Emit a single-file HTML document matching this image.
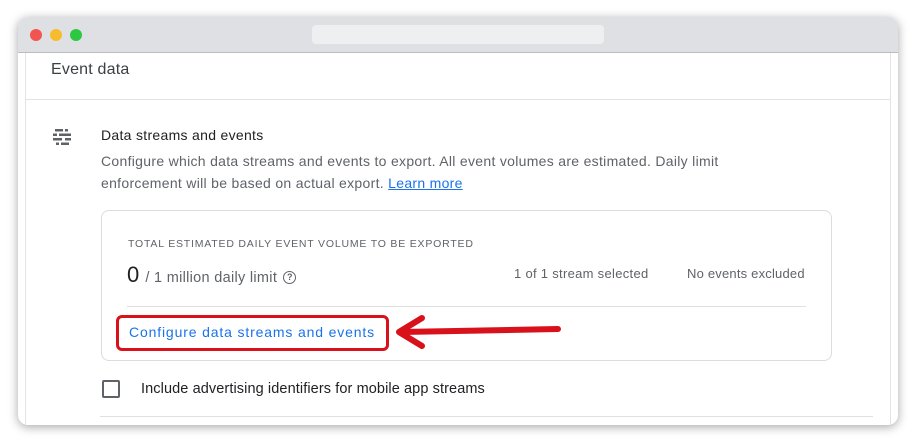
<!DOCTYPE html>
<html><head><style>
body{margin:0;width:916px;height:442px;background:#fff;position:relative;overflow:hidden;font-family:"Liberation Sans",Arial,sans-serif;}
.win{position:absolute;left:18px;top:17px;width:880px;height:408px;border-radius:10px;background:#fff;box-shadow:0 2px 10px rgba(0,0,0,.35);overflow:hidden}
.bar{position:absolute;left:0;top:0;right:0;height:35px;background:#dfe0e4;border-bottom:1px solid #bcbcbc}
.dot{position:absolute;top:12px;width:12px;height:12px;border-radius:50%}
.url{position:absolute;left:294px;top:8px;width:292px;height:19px;background:#eeeff1;border-radius:4px}
.panel{position:absolute;left:7px;top:36px;width:864px;height:380px;border-left:1px solid #e3e3e3;border-right:1px solid #e3e3e3}
.t{position:absolute;white-space:nowrap}
</style></head><body>
<div class="win">
<div class="bar"><div class="dot" style="left:12px;background:#f2554f"></div><div class="dot" style="left:32px;background:#f7bb2e"></div><div class="dot" style="left:52px;background:#2cc841"></div><div class="url"></div></div>
<div class="panel"></div>
<div style="position:absolute;left:8px;top:82px;width:864px;height:1px;background:#e3e3e3"></div>
<div style="position:absolute;left:82px;top:399px;width:773px;height:1px;background:#e0e0e0"></div>
</div>
<div class="t" style="left:51px;top:61px;font-size:16px;color:#3c4043;letter-spacing:.2px">Event data</div>
<svg style="position:absolute;left:53px;top:128px" width="20" height="20" viewBox="0 0 20 20"><g fill="#5f6368"><rect x="2" y="1" width="8" height="2.5"/><rect x="12" y="1" width="3" height="2.5"/><rect x="0" y="5.5" width="4" height="2.5"/><rect x="6" y="5.5" width="12" height="2.5"/><rect x="0" y="10" width="9" height="2.5"/><rect x="12" y="10" width="6" height="2.5"/><rect x="3" y="14.5" width="3" height="2.5"/><rect x="8" y="14.5" width="8" height="2.5"/></g></svg>
<div class="t" style="left:101px;top:127px;font-size:14px;color:#202124;letter-spacing:.3px">Data streams and events</div>
<div class="t" style="left:101px;top:150px;font-size:14px;color:#5f6368;line-height:22px;letter-spacing:.3px">Configure which data streams and events to export. All event volumes are estimated. Daily limit<br>enforcement will be based on actual export. <span style="color:#1a73e8;text-decoration:underline">Learn more</span></div>
<div style="position:absolute;left:101px;top:210px;width:729px;height:149px;border:1px solid #dadce0;border-radius:8px"></div>
<div class="t" style="left:128px;top:238px;font-size:10.5px;letter-spacing:.8px;color:#5f6368">TOTAL ESTIMATED DAILY EVENT VOLUME TO BE EXPORTED</div>
<div class="t" style="left:127px;top:262px;font-size:22px;color:#202124">0 <span style="font-size:14.5px;color:#5f6368;letter-spacing:.3px">/ 1 million daily limit</span> <span style="display:inline-block;width:11px;height:11px;border:1.3px solid #5f6368;border-radius:50%;font-size:9px;text-align:center;line-height:11px;color:#5f6368;vertical-align:2px;font-weight:bold">?</span></div>
<div class="t" style="left:514px;top:266px;font-size:13px;color:#5f6368;letter-spacing:.3px">1 of 1 stream selected</div>
<div class="t" style="left:687px;top:266px;font-size:13px;color:#5f6368;letter-spacing:.2px">No events excluded</div>
<div style="position:absolute;left:127px;top:306px;width:679px;height:1px;background:#e0e0e0"></div>
<div style="position:absolute;left:116px;top:315px;width:273px;height:36px;border:3.5px solid #d8111b;border-radius:6px;box-sizing:border-box"></div>
<div class="t" style="left:129px;top:324px;font-size:14px;color:#1a73e8;letter-spacing:.85px">Configure data streams and events</div>
<svg style="position:absolute;left:390px;top:314px" width="175" height="36" viewBox="0 0 175 36"><path d="M168 15 L12 18 M32 4 L9 18 L32 32" stroke="#d8111b" stroke-width="6" fill="none" stroke-linecap="round" stroke-linejoin="round"/></svg>
<div style="position:absolute;left:102px;top:380px;width:18px;height:18px;border:2px solid #5f6368;border-radius:2px;box-sizing:border-box"></div>
<div class="t" style="left:141px;top:381px;font-size:14.5px;color:#202124;letter-spacing:.1px">Include advertising identifiers for mobile app streams</div>
</body></html>
